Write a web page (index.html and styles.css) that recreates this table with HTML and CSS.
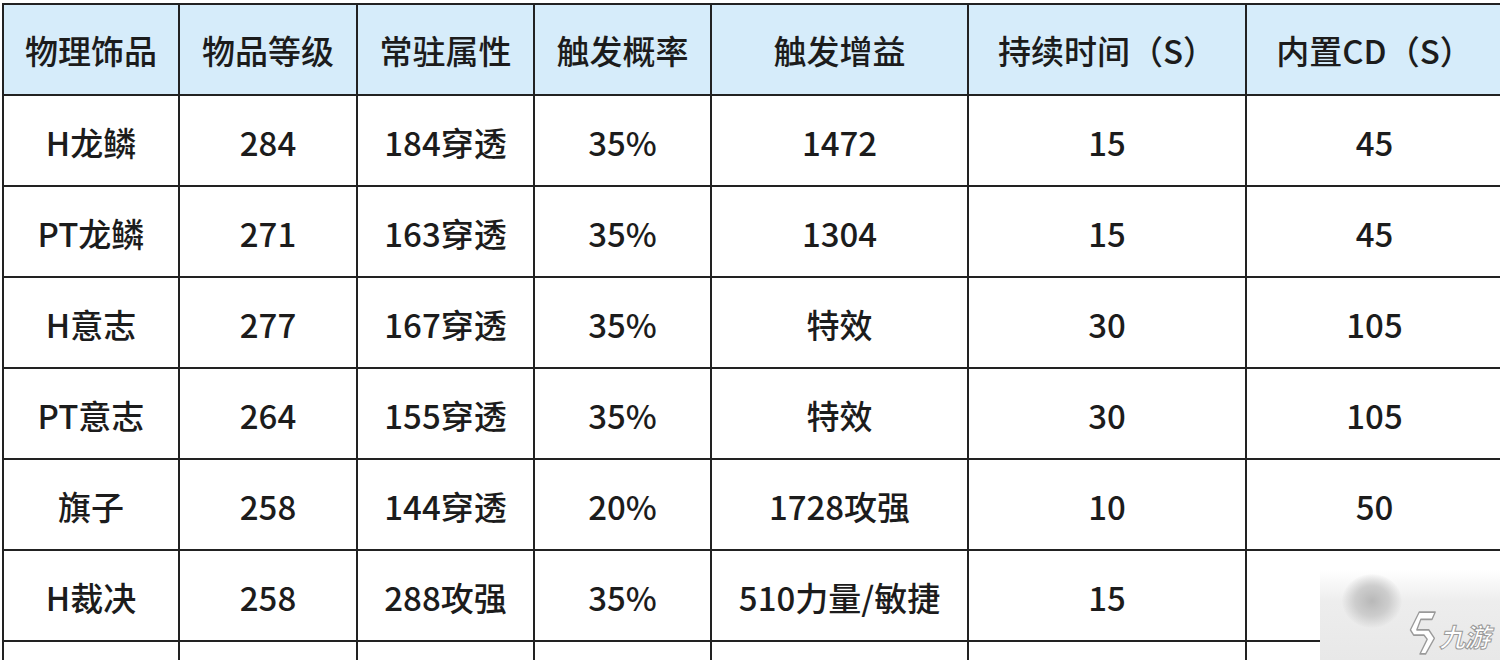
FILE: index.html
```html
<!DOCTYPE html>
<html lang="zh-CN">
<head>
<meta charset="utf-8">
<link rel="stylesheet" href="styles.css">
</head>
<body>
<div class="page">
<table class="grid">
<colgroup>
<col class="c1"><col class="c2"><col class="c3"><col class="c4"><col class="c5"><col class="c6"><col class="c7">
</colgroup>
<thead>
<tr><th>物理饰品</th><th>物品等级</th><th>常驻属性</th><th>触发概率</th><th>触发增益</th><th>持续时间（S）</th><th>内置CD（S）</th></tr>
</thead>
<tbody>
<tr><td>H龙鳞</td><td>284</td><td>184穿透</td><td>35%</td><td>1472</td><td>15</td><td>45</td></tr>
<tr><td>PT龙鳞</td><td>271</td><td>163穿透</td><td>35%</td><td>1304</td><td>15</td><td>45</td></tr>
<tr><td>H意志</td><td>277</td><td>167穿透</td><td>35%</td><td>特效</td><td>30</td><td>105</td></tr>
<tr><td>PT意志</td><td>264</td><td>155穿透</td><td>35%</td><td>特效</td><td>30</td><td>105</td></tr>
<tr><td>旗子</td><td>258</td><td>144穿透</td><td>20%</td><td>1728攻强</td><td>10</td><td>50</td></tr>
<tr><td>H裁决</td><td>258</td><td>288攻强</td><td>35%</td><td>510力量/敏捷</td><td>15</td><td></td></tr>
<tr><td></td><td></td><td></td><td></td><td></td><td></td><td></td></tr>
</tbody>
</table>
<div class="watermark">
<span class="blob"></span>
<svg class="logo" viewBox="0 0 40 44" width="32" height="46" preserveAspectRatio="none">
<path d="M14 2 L34 2 L30 9 L16 9 L11 19 L26 19 L33 27 L22 42 L15 42 L24 28 L20 24 L7 24 L3 19 Z" fill="#fff" stroke="#9a9a9a" stroke-width="1.6" stroke-linejoin="round"/>
</svg>
<span class="brand">九游</span>
</div>
</div>
</body>
</html>
```
FILE: styles.css
```css
html, body {
  margin: 0;
  padding: 0;
  background: #ffffff;
  overflow: hidden;
}
.page {
  position: relative;
  width: 1500px;
  height: 660px;
  overflow: hidden;
  padding: 3px 0 0 2px;
  box-sizing: border-box;
}
.grid {
  border-collapse: collapse;
  table-layout: fixed;
  width: 1500px;
  font-family: "Noto Sans CJK SC", "Noto Sans", sans-serif;
  font-size: 33px;
  font-weight: 500;
  color: #1c1c1c;
}
.c1 { width: 176px; }
.c2 { width: 178px; }
.c3 { width: 177px; }
.c4 { width: 177px; }
.c5 { width: 257px; }
.c6 { width: 278px; }
.c7 { width: 257px; }
.grid th, .grid td {
  border: 2px solid #222;
  height: 91px;
  padding: 4px 0 0 0;
  box-sizing: border-box;
  text-align: center;
  vertical-align: middle;
  line-height: 1;
  white-space: nowrap;
}
.grid th {
  background: #d6ecfa;
  font-weight: 500;
  padding-top: 2px;
}
.watermark {
  position: absolute;
  right: 0;
  bottom: 0;
  width: 180px;
  height: 90px;
  background: linear-gradient(to bottom, rgba(236,236,236,0) 0%, #ededed 35%, #e8e8e8 100%);
}
.blob {
  position: absolute;
  left: 22px;
  top: 4px;
  width: 60px;
  height: 54px;
  border-radius: 50%;
  background: radial-gradient(ellipse at center, #b8b8b8 0%, #cdcdcd 40%, rgba(232,232,232,0) 72%);
}
.logo {
  position: absolute;
  left: 88px;
  top: 40px;
}
.brand {
  position: absolute;
  left: 122px;
  top: 53px;
  font-family: "Noto Sans CJK SC", sans-serif;
  font-size: 26px;
  line-height: 1;
  font-weight: 700;
  color: #fff;
  letter-spacing: -1px;
  transform: skewX(-14deg);
  -webkit-text-stroke: 1px #9a9a9a;
}
```
